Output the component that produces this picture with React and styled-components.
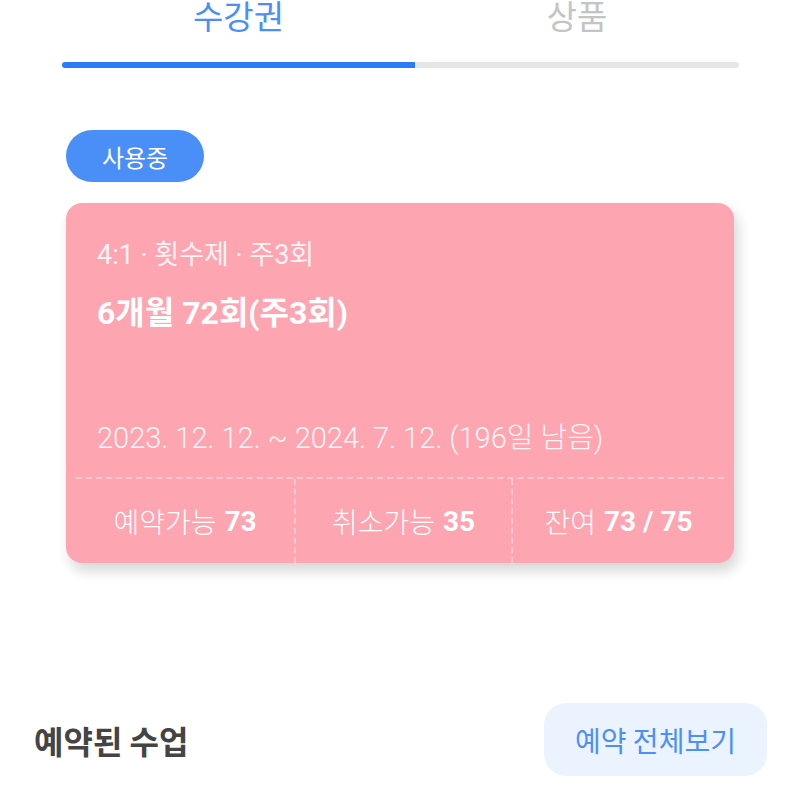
import React from 'react';
import styled, { createGlobalStyle } from 'styled-components';

const GlobalStyle = createGlobalStyle`
  html, body {
    margin: 0;
    padding: 0;
    background: #ffffff;
    overflow: hidden;
  }
  body {
    font-family: Roboto, 'Noto Sans CJK KR', sans-serif;
  }
`;

const Page = styled.div`
  width: 800px;
  height: 800px;
  margin-top: -7px;
  display: flex;
  flex-direction: column;
`;

const Tabs = styled.div`
  margin: 0 61px 0 62px;
  display: flex;
`;

const Tab = styled.div`
  flex: ${props => (props.active ? '0 0 353px' : '1')};
  display: flex;
  flex-direction: column;
  align-items: center;
`;

const TabLabel = styled.span`
  font-family: 'Noto Sans CJK KR', sans-serif;
  font-size: 33px;
  line-height: 44px;
  color: ${props => (props.active ? '#4a8ff7' : '#c4c4c4')};
`;

const TabBar = styled.div`
  align-self: stretch;
  margin-top: 25px;
  height: 6px;
  background: ${props => (props.active ? '#2a7cf6' : '#e6e6e6')};
  border-radius: ${props => (props.active ? '3px 0 0 3px' : '0 3px 3px 0')};
`;

const Content = styled.div`
  padding: 62px 66px 0 66px;
  display: flex;
  flex-direction: column;
  align-items: flex-start;
`;

const Badge = styled.div`
  width: 138px;
  height: 52px;
  border-radius: 26px;
  background: #4a8ff7;
  color: #ffffff;
  font-size: 24px;
  display: flex;
  align-items: center;
  justify-content: center;
`;

const Card = styled.div`
  margin-top: 21px;
  align-self: stretch;
  height: 360px;
  border-radius: 16px;
  background: #fda5b1;
  box-shadow: 4px 8px 14px rgba(0, 0, 0, 0.16);
  display: flex;
  flex-direction: column;
  color: #ffffff;
`;

const CardBody = styled.div`
  flex: 1;
  padding: 35px 31px 0 31px;
  display: flex;
  flex-direction: column;
`;

const Meta = styled.div`
  font-size: 27px;
  line-height: 34px;
  color: #fff3f5;
`;

const Title = styled.div`
  margin-top: 20px;
  font-size: 32px;
  line-height: 42px;
  font-weight: 700;
`;

const Period = styled.div`
  margin-top: auto;
  margin-bottom: 20px;
  font-size: 29px;
  line-height: 38px;
  font-weight: 300;
  color: #fff6f7;
`;

const Stats = styled.div`
  margin: 0 10px;
  height: 84px;
  border-top: 2px dashed #fdc8cf;
  display: grid;
  grid-template-columns: 218px 217px 1fr;
`;

const Stat = styled.div`
  display: flex;
  align-items: center;
  justify-content: center;
  gap: 8px;
  font-size: 28px;
  font-weight: 300;
  border-left: ${props => (props.first ? 'none' : '2px dashed #fdc8cf')};
`;

const StatValue = styled.b`
  font-weight: 700;
`;

const Footer = styled.div`
  margin-top: auto;
  padding: 0 33px 17px 34px;
  display: flex;
  align-items: center;
  justify-content: space-between;
`;

const SectionTitle = styled.h2`
  margin: 0;
  font-family: 'Noto Sans CJK KR', sans-serif;
  font-size: 32px;
  font-weight: 700;
  color: #444444;
`;

const LinkButton = styled.button`
  width: 223px;
  height: 73px;
  border: none;
  border-radius: 22px;
  background: #ebf3ff;
  color: #4d8ff6;
  font-family: 'Noto Sans CJK KR', sans-serif;
  font-size: 28px;
`;

export default function App() {
  return (
    <>
      <GlobalStyle />
      <Page>
        <Tabs>
          <Tab active>
            <TabLabel active>수강권</TabLabel>
            <TabBar active />
          </Tab>
          <Tab>
            <TabLabel>상품</TabLabel>
            <TabBar />
          </Tab>
        </Tabs>
        <Content>
          <Badge>사용중</Badge>
          <Card>
            <CardBody>
              <Meta>4:1 · 횟수제 · 주3회</Meta>
              <Title>6개월 72회(주3회)</Title>
              <Period>2023. 12. 12. ~ 2024. 7. 12. (196일 남음)</Period>
            </CardBody>
            <Stats>
              <Stat first>
                예약가능 <StatValue>73</StatValue>
              </Stat>
              <Stat>
                취소가능 <StatValue>35</StatValue>
              </Stat>
              <Stat>
                잔여 <StatValue>73 / 75</StatValue>
              </Stat>
            </Stats>
          </Card>
        </Content>
        <Footer>
          <SectionTitle>예약된 수업</SectionTitle>
          <LinkButton>예약 전체보기</LinkButton>
        </Footer>
      </Page>
    </>
  );
}
